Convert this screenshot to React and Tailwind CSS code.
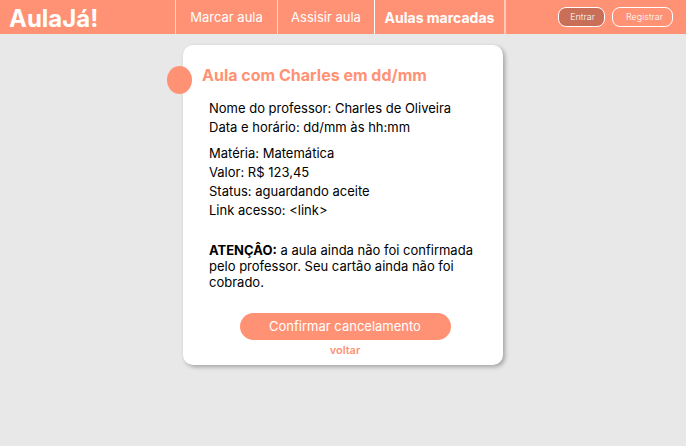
const tabs = [
  { label: "Marcar aula", style: "w-[102px] border-l-white/60 text-[13px]" },
  { label: "Assisir aula", style: "w-[97px] border-l-white/60 text-[13px]" },
  { label: "Aulas marcadas", style: "w-[130px] border-l-white text-sm font-bold", current: true },
];

function Header() {
  return (
    <header className="flex h-[34px] items-center bg-[#ff9274] text-white">
      <a href="#inicio" className="w-[175px] shrink-0 pl-[9px] pt-1 text-2xl leading-8 font-bold">
        AulaJá!
      </a>
      <nav className="flex h-full shrink-0 border-r-2 border-white/50">
        {tabs.map((tab) => (
          <a
            key={tab.label}
            href="#aulas"
            aria-current={tab.current ? "page" : undefined}
            className={`flex items-center justify-center border-l pt-px whitespace-nowrap ${tab.style}`}
          >
            {tab.label}
          </a>
        ))}
      </nav>
      <div className="ml-auto flex gap-[7px] pr-[13px] text-[9px] font-light">
        <button type="button" className="h-5 w-[47px] rounded-lg border border-white bg-[#c96f58] pl-0.5">
          Entrar
        </button>
        <button type="button" className="h-5 w-[61px] rounded-lg border border-white pl-1">
          Registrar
        </button>
      </div>
    </header>
  );
}

function Field({ label, value }) {
  return (
    <div>
      <dt className="inline">{label}:</dt> <dd className="inline">{value}</dd>
    </div>
  );
}

export default function App() {
  return (
    <div className="min-h-screen bg-[#e8e8e8] font-['Inter',sans-serif] text-black">
      <Header />
      <main className="px-4 pt-[11px] pb-4">
        <section className="relative mx-auto w-full max-w-[320px] rounded-[10px] bg-white pt-[19px] pr-[22px] pb-[7px] pl-[26px] shadow-[2px_2px_4px_rgba(0,0,0,0.3)]">
          <span className="absolute top-[21px] -left-4 h-7 w-[25px] rounded-[50%] bg-[#ff9274]" />
          <h1 className="-ml-[7px] text-base leading-[22px] font-bold text-[#ff9274]">
            Aula com Charles em dd/mm
          </h1>
          <dl className="mt-[13px] text-[13px] leading-[19px]">
            <Field label="Nome do professor" value="Charles de Oliveira" />
            <Field label="Data e horário" value="dd/mm às hh:mm" />
          </dl>
          <dl className="mt-[7px] text-[13px] leading-[19px]">
            <Field label="Matéria" value="Matemática" />
            <Field label="Valor" value="R$ 123,45" />
            <Field label="Status" value="aguardando aceite" />
            <Field label="Link acesso" value="<link>" />
          </dl>
          <p className="mt-[22px] text-[13px] leading-4">
            <strong className="font-bold">ATENÇÂO:</strong> a aula ainda não foi confirmada pelo
            professor. Seu cartão ainda não foi cobrado.
          </p>
          <div className="mt-[23px] flex flex-col items-center">
            <button
              type="button"
              className="h-[27px] w-[211px] rounded-full bg-[#ff9274] text-[13px] text-white"
            >
              Confirmar cancelamento
            </button>
            <a href="#voltar" className="mt-0.5 text-[11px] leading-4 font-semibold text-[#ff9274]">
              voltar
            </a>
          </div>
        </section>
      </main>
    </div>
  );
}
